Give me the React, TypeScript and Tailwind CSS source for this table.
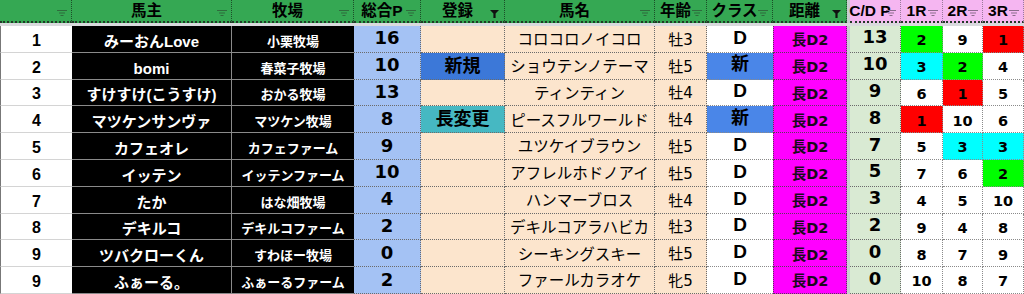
import React from 'react';

type Hl = '' | 'g' | 'r' | 'c';

type Row = {
  rank: string;
  owner: string;
  farm: string;
  total: string;
  reg: '' | '新規' | '長変更';
  horse: string;
  age: string;
  cls: 'D' | '新';
  cdp: string;
  rs: [string, Hl][];
};

const rows: Row[] = [
  { rank: '1', owner: 'みーおんLove', farm: '小栗牧場', total: '16', reg: '', horse: 'コロコロノイコロ', age: '牡3', cls: 'D', cdp: '13', rs: [['2', 'g'], ['9', ''], ['1', 'r']] },
  { rank: '2', owner: 'bomi', farm: '春菜子牧場', total: '10', reg: '新規', horse: 'ショウテンノテーマ', age: '牡5', cls: '新', cdp: '10', rs: [['3', 'c'], ['2', 'g'], ['4', '']] },
  { rank: '3', owner: 'すけすけ(こうすけ)', farm: 'おかる牧場', total: '13', reg: '', horse: 'ティンティン', age: '牡4', cls: 'D', cdp: '9', rs: [['6', ''], ['1', 'r'], ['5', '']] },
  { rank: '4', owner: 'マツケンサンヴァ', farm: 'マツケン牧場', total: '8', reg: '長変更', horse: 'ピースフルワールド', age: '牡4', cls: '新', cdp: '8', rs: [['1', 'r'], ['10', ''], ['6', '']] },
  { rank: '5', owner: 'カフェオレ', farm: 'カフェファーム', total: '9', reg: '', horse: 'ユツケイブラウン', age: '牡5', cls: 'D', cdp: '7', rs: [['5', ''], ['3', 'c'], ['3', 'c']] },
  { rank: '6', owner: 'イッテン', farm: 'イッテンファーム', total: '10', reg: '', horse: 'アフレルホドノアイ', age: '牡5', cls: 'D', cdp: '5', rs: [['7', ''], ['6', ''], ['2', 'g']] },
  { rank: '7', owner: 'たか', farm: 'はな畑牧場', total: '4', reg: '', horse: 'ハンマーブロス', age: '牡4', cls: 'D', cdp: '3', rs: [['4', ''], ['5', ''], ['10', '']] },
  { rank: '8', owner: 'デキルコ', farm: 'デキルコファーム', total: '2', reg: '', horse: 'デキルコアラハビカ', age: '牡3', cls: 'D', cdp: '2', rs: [['9', ''], ['4', ''], ['8', '']] },
  { rank: '9', owner: 'ツバクローくん', farm: 'すわほー牧場', total: '0', reg: '', horse: 'シーキングスキー', age: '牡5', cls: 'D', cdp: '0', rs: [['8', ''], ['7', ''], ['9', '']] },
  { rank: '9', owner: 'ふぁーる。', farm: 'ふぁーるファーム', total: '2', reg: '', horse: 'ファールカラオケ', age: '牝5', cls: 'D', cdp: '0', rs: [['10', ''], ['8', ''], ['7', '']] },
];

const hlBg: Record<Hl, string> = {
  '': 'bg-white',
  g: 'bg-[#00ff00]',
  r: 'bg-[#ff0000]',
  c: 'bg-[#00ffff]',
};

const sans = "font-['Liberation_Sans','Noto_Sans_CJK_JP',sans-serif]";
const deja = "font-['DejaVu_Sans','Noto_Sans_CJK_JP',sans-serif]";

// filter icon (three tapered lines) / active filter funnel
function FilterIcon({ active, pink }: { active?: boolean; pink?: boolean }) {
  if (active) {
    return (
      <svg width="9" height="8" viewBox="0 0 9 8" className="absolute right-[5px] top-[10px]">
        <path d="M0 0h9L5.6 3.6V8H3.4V3.6z" fill="#111" />
      </svg>
    );
  }
  return (
    <svg
      width="10"
      height="6"
      viewBox="0 0 10 6"
      className={`absolute right-[4px] top-[10px] ${pink ? 'text-[#8a6c8c]' : 'text-[#2f6b3d]'}`}
    >
      <path d="M0 0.5h10M2 3h6M3.5 5.5h3" stroke="currentColor" strokeWidth="1" />
    </svg>
  );
}

function Head({ label, pink, active }: { label?: string; pink?: boolean; active?: boolean }) {
  return (
    <div
      className={`relative flex h-[23px] items-start justify-center border-b-2 border-b-[#213a27] pt-[1px] pr-[10px] text-[15.5px] font-bold leading-[20px] text-black ${sans} ${
        pink ? 'bg-[#f5b6f1] border-r border-r-[#9a7a9a] border-dotted' : 'bg-[#35a853] border-r border-r-[#1c4d28] border-dotted'
      }`}
    >
      <span className="whitespace-nowrap">{label}</span>
      <FilterIcon active={active} pink={pink} />
    </div>
  );
}

function Cell({ className, children }: { className: string; children?: React.ReactNode }) {
  return (
    <div className={`flex h-[26.8px] justify-center overflow-visible whitespace-nowrap leading-none ${className}`}>
      {children}
    </div>
  );
}

export default function App() {
  return (
    <div className="h-[294px] w-[1024px] overflow-hidden bg-white">
      <div className="grid grid-cols-[72px_160px_122px_67px_84px_150px_52px_66px_74px_3px_51px_42px_40px_41px]">
        <Head />
        <Head label="馬主" />
        <Head label="牧場" />
        <Head label="総合P" />
        <Head label="登録" active />
        <Head label="馬名" />
        <Head label="年齢" />
        <Head label="クラス" />
        <Head label="距離" active />
        <div className="h-[23px] bg-[#c9ccd2]" />
        <Head label="C/D P" pink />
        <Head label="1R" pink />
        <Head label="2R" pink />
        <Head label="3R" pink />
        <div className="col-span-14 h-[3px] bg-[#d9dadd]" />

        {rows.map((r, i) => (
          <React.Fragment key={i}>
            <Cell className={`items-end pb-[3px] border-l border-dotted border-l-[#777] border-b border-b-[#d4d4d4] border-solid bg-white text-[16px] font-bold text-black ${sans}`}>
              {r.rank}
            </Cell>
            <Cell className={`items-end pb-[3px] bg-black border-b border-r border-[#8a8a8a] text-[15px] font-bold text-white ${sans}`}>
              {r.owner}
            </Cell>
            <Cell className={`items-end pb-[4px] bg-black border-b border-[#8a8a8a] text-[13px] font-bold text-white ${sans}`}>
              {r.farm}
            </Cell>
            <Cell className={`items-center pb-[1px] bg-[#a4c2f4] border-b border-r border-dotted border-[#6b6b6b] text-[18px] font-bold text-black ${deja}`}>
              {r.total}
            </Cell>
            <Cell
              className={`items-center border-b border-r border-dotted border-[#6b6b6b] text-[18px] font-bold text-black ${sans} ${
                r.reg === '新規' ? 'bg-[#3c78d8]' : r.reg === '長変更' ? 'bg-[#46b8c2]' : 'bg-[#fce5cd]'
              }`}
            >
              {r.reg}
            </Cell>
            <Cell className={`items-end pb-[4px] bg-[#fce5cd] border-b border-r border-dotted border-[#6b6b6b] text-[15.5px] text-black ${sans}`}>
              {r.horse}
            </Cell>
            <Cell className={`items-end pb-[4px] bg-[#fce5cd] border-b border-r border-dotted border-[#6b6b6b] text-[15px] text-black ${deja}`}>
              {r.age}
            </Cell>
            <Cell
              className={`items-center pb-[3px] border-b border-dotted border-[#8a8a8a] font-bold text-black ${
                r.cls === '新' ? `bg-[#4a86e8] text-[18px] ${sans}` : `bg-white text-[19px] ${sans}`
              }`}
            >
              {r.cls}
            </Cell>
            <Cell className={`items-end pb-[4px] bg-[#ff00ff] border-b border-l border-r border-dotted border-[#5a3a5a] text-[14.5px] font-bold text-[#1a0a1a] ${deja}`}>
              長D2
            </Cell>
            <div className="h-[26.8px] bg-[#c9ccd2]" />
            <Cell className={`items-center pb-[3px] bg-[#d9ead3] border-b border-r border-dotted border-[#6b6b6b] text-[18px] font-bold text-black ${deja}`}>
              {r.cdp}
            </Cell>
            {r.rs.map(([v, h], j) => (
              <Cell
                key={j}
                className={`items-end pb-[4px] border-b border-r border-dotted border-[#8a8a8a] text-[14.5px] font-bold text-black ${deja} ${hlBg[h]}`}
              >
                {v}
              </Cell>
            ))}
          </React.Fragment>
        ))}
      </div>
    </div>
  );
}
